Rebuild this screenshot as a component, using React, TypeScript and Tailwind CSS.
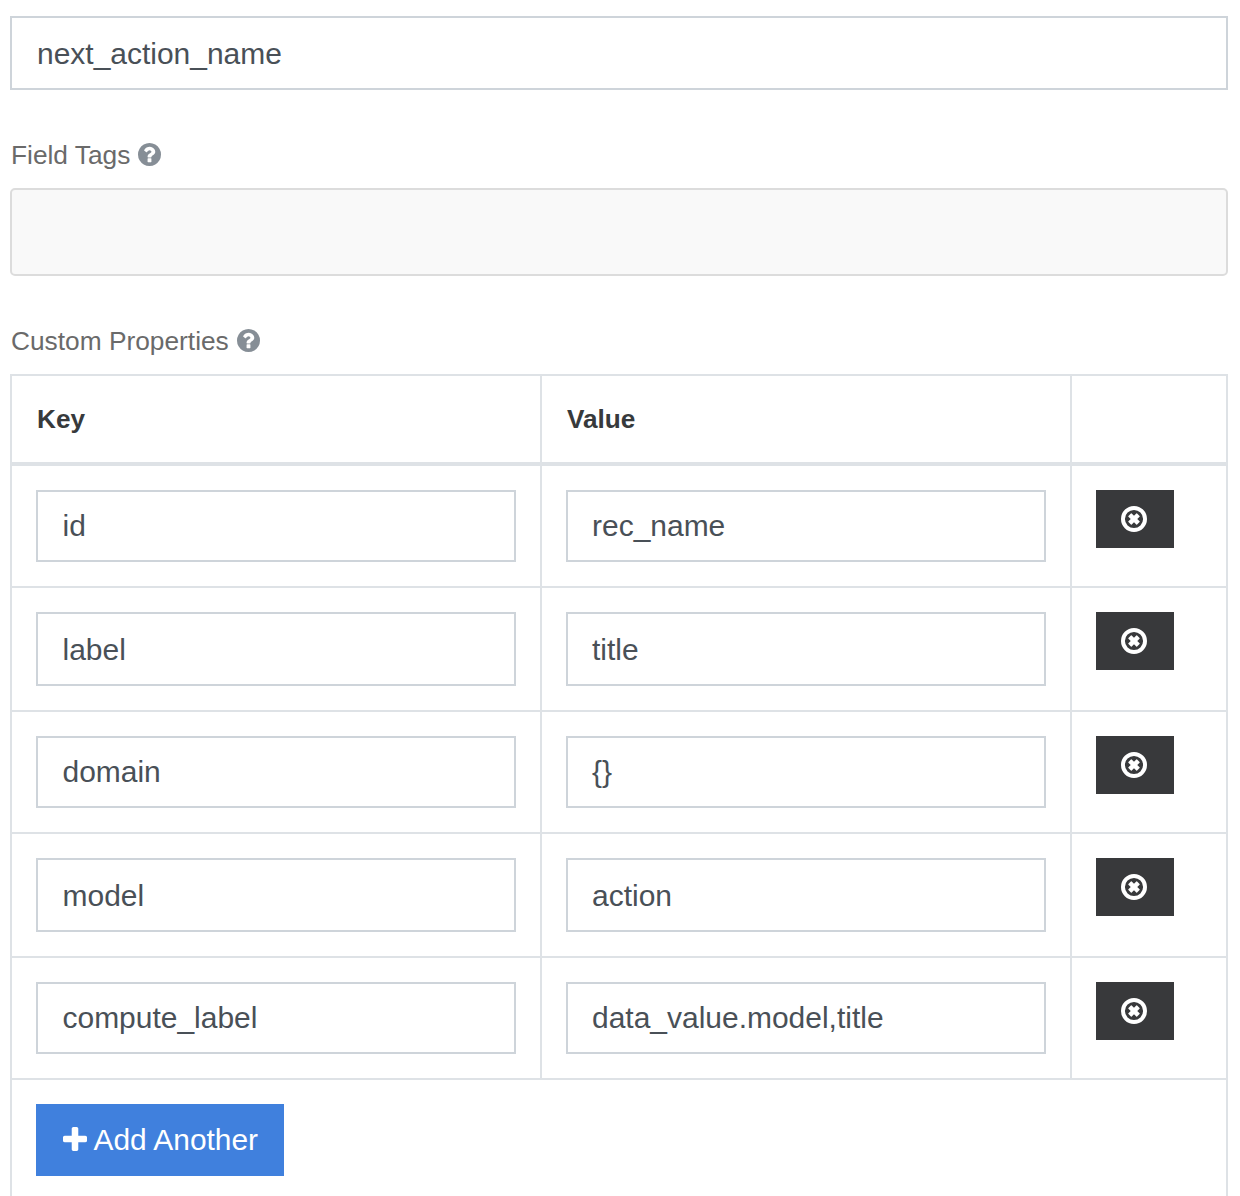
import React from 'react';

const QUESTION =
  'M1024 1376v-192q0-14-9-23t-23-9h-192q-14 0-23 9t-9 23v192q0 14 9 23t23 9h192q14 0 23-9t9-23zm256-672q0-88-55.5-163t-138.5-116-170-41q-243 0-371 213-15 24 8 42l132 100q7 6 19 6 16 0 25-12 53-68 86-92 34-24 86-24 48 0 85.5 26t37.5 59q0 38-20 61t-68 45q-63 28-115.5 86.5t-52.5 125.5v36q0 14 9 23t23 9h192q14 0 23-9t9-23q0-19 21.5-49.5t54.5-49.5q32-18 49-28.5t46-35 44.5-48 28-60.5 12.5-81zm384 192q0 209-103 385.5t-279.5 279.5-385.5 103-385.5-103-279.5-279.5-103-385.5 103-385.5 279.5-279.5 385.5-103 385.5 103 279.5 279.5 103 385.5z';
const PLUS =
  'M1600 736v192q0 40-28 68t-68 28h-416v416q0 40-28 68t-68 28h-192q-40 0-68-28t-28-68v-416h-416q-40 0-68-28t-28-68v-192q0-40 28-68t68-28h416v-416q0-40 28-68t68-28h192q40 0 68 28t28 68v416h416q40 0 68 28t28 68z';
const TIMES =
  'M1225 1079l-146 146q-10 10-23 10t-23-10l-137-137-137 137q-10 10-23 10t-23-10l-146-146q-10-10-10-23t10-23l137-137-137-137q-10-10-10-23t10-23l146-146q10-10 23-10t23 10l137 137 137-137q10-10 23-10t23 10l146 146q10 10 10 23t-10 23l-137 137 137 137q10 10 10 23t-10 23z';

const rows = [
  { k: 'id', v: 'rec_name', h: 'h-[72px]', pad: '' },
  { k: 'label', v: 'title', h: 'h-[74px]', pad: 'pt-[2px]' },
  { k: 'domain', v: '{}', h: 'h-[72px]', pad: '' },
  { k: 'model', v: 'action', h: 'h-[74px]', pad: 'pt-[2px]' },
  { k: 'compute_label', v: 'data_value.model,title', h: 'h-[72px]', pad: '' },
];

function Field({ value, className }: { value: string; className: string }) {
  return (
    <div className={`flex items-center border-2 border-[#ced4da] bg-white text-[29.97px] leading-[30px] text-[#495057] ${className}`}>
      <span>{value}</span>
    </div>
  );
}

function Label({ children }: { children: string }) {
  return (
    <div className="flex h-[32px] items-center gap-2 pl-px text-[26.3px] leading-[32px] text-[#6a6a6a]">
      <span>{children}</span>
      <svg viewBox="128 128 1536 1536" className="mb-[2px] size-[23px]" fill="#868e96">
        <path d={QUESTION} />
      </svg>
    </div>
  );
}

export default function App() {
  return (
    <div className="h-[1196px] overflow-hidden bg-white pl-[10px] pr-3 pt-4 font-['Liberation_Sans',Arial,sans-serif]">
      <Field value="next_action_name" className="h-[74px] pl-[25px] pt-[2px]" />

      <div className="mt-[49px]">
        <Label>Field Tags</Label>
      </div>
      <div className="mt-[17px] h-[88px] rounded-[5px] border-2 border-[#dcdcdc] bg-[#f9f9f9]" />

      <div className="mt-[49px]">
        <Label>Custom Properties</Label>
      </div>
      <div className="mt-[17px] h-[840px] border-2 border-[#dee2e6]">
        <div className="grid h-[90px] grid-cols-[530px_530px_1fr] border-b-4 border-[#dee2e6] text-[26.2px] font-bold leading-none text-[#373a3c]">
          <div className="flex items-center border-r-2 border-[#dee2e6] pl-[25px]">Key</div>
          <div className="flex items-center border-r-2 border-[#dee2e6] pl-[25px]">Value</div>
          <div />
        </div>
        {rows.map((r) => (
          <div key={r.k} className="grid grid-cols-[530px_530px_1fr] border-b-2 border-[#dee2e6]">
            <div className="border-r-2 border-[#dee2e6] p-6">
              <Field value={r.k} className={`pl-[24.5px] ${r.h} ${r.pad}`} />
            </div>
            <div className="border-r-2 border-[#dee2e6] p-6">
              <Field value={r.v} className={`pl-6 ${r.h} ${r.pad}`} />
            </div>
            <div className="p-6">
              <button className="flex h-[58px] w-[78px] items-center justify-center bg-[#38393b] pr-[2px]">
                <svg viewBox="128 128 1536 1536" className="size-[26px]" fill="#fff">
                  <circle cx="896" cy="896" r="652" fill="none" stroke="#fff" strokeWidth="232" />
                  <path d={TIMES} />
                </svg>
              </button>
            </div>
          </div>
        ))}
        <div className="p-6">
          <button className="flex h-[72px] w-[248px] items-center gap-[6.5px] bg-[#4080dd] pl-[27px] text-[29.9px] leading-[30px] text-white">
            <svg viewBox="192 128 1408 1408" className="mb-[2px] size-[24px] shrink-0" fill="#fff">
              <path d={PLUS} />
            </svg>
            <span className="whitespace-nowrap">Add Another</span>
          </button>
        </div>
      </div>
    </div>
  );
}
